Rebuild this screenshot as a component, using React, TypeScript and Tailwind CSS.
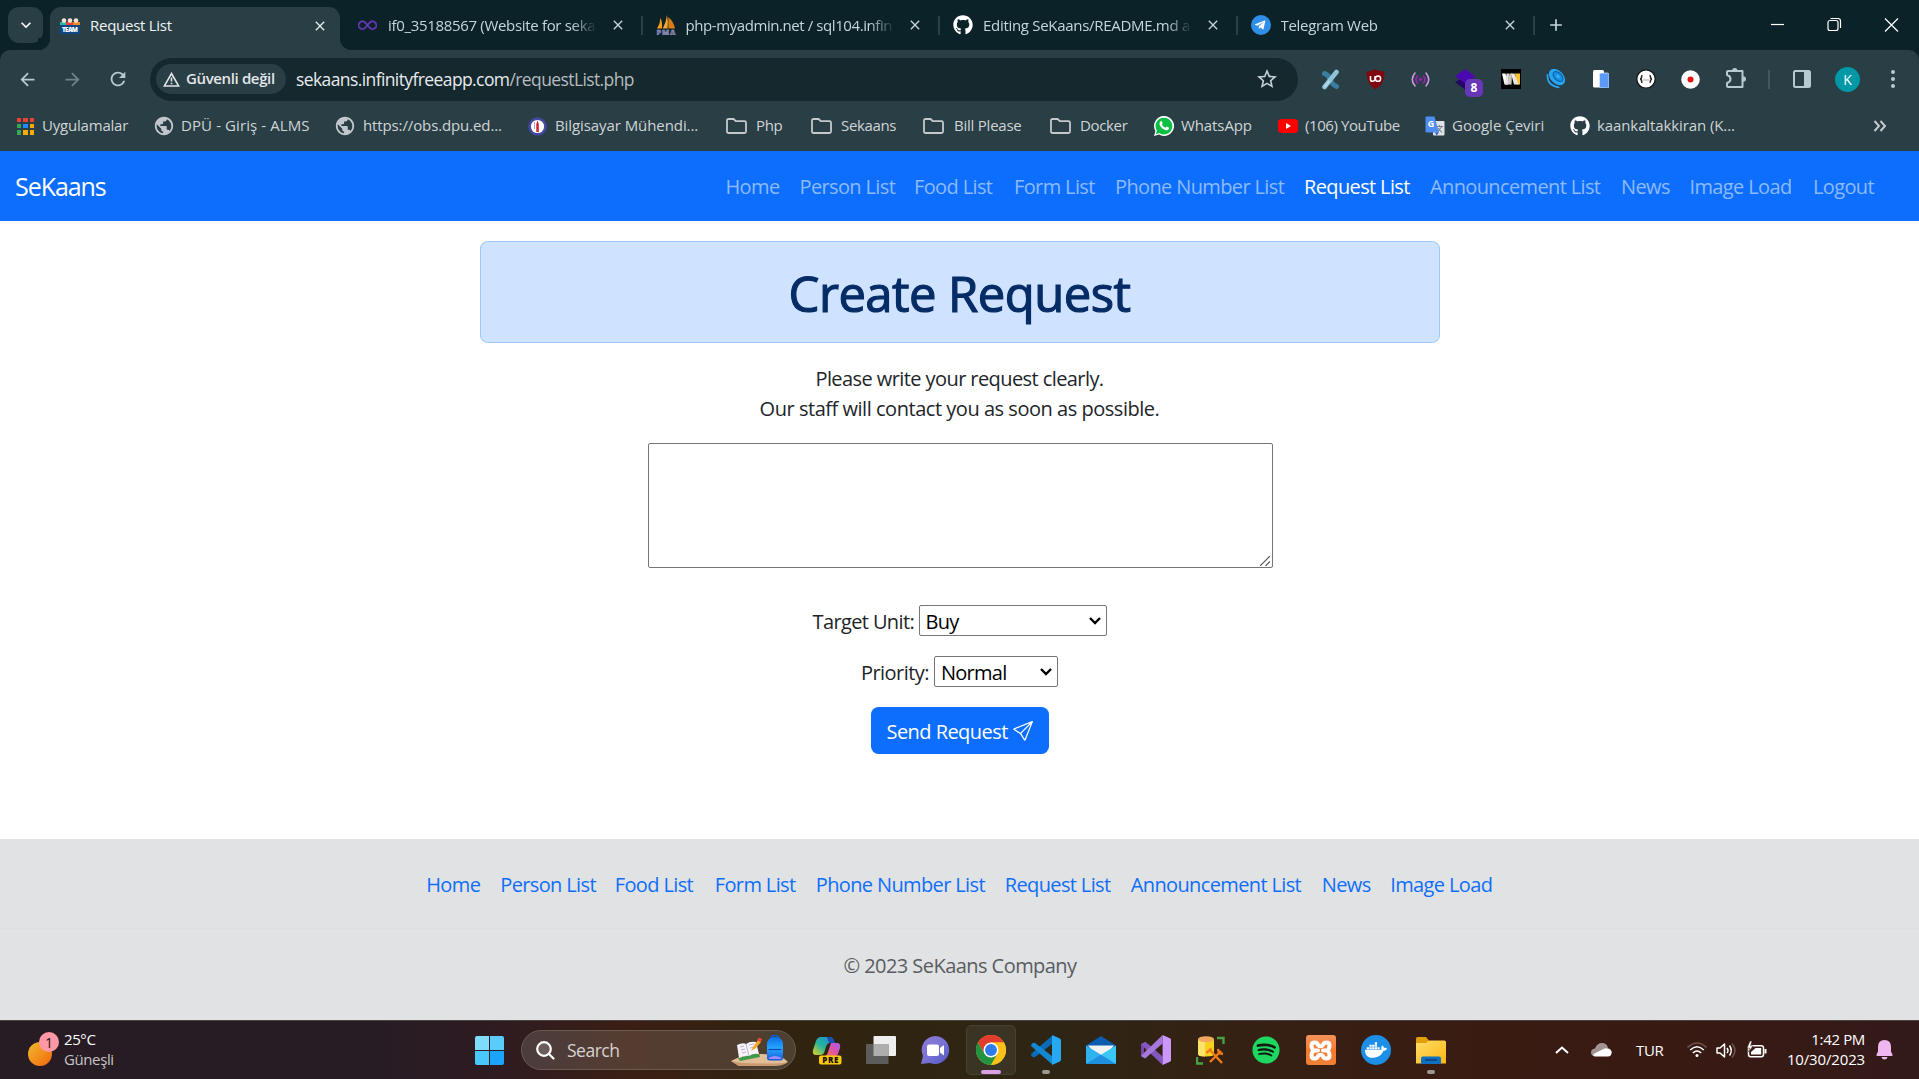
import React from "react";
import { BsInfinity, BsSend } from "react-icons/bs";
import { FaGithub, FaSpotify, FaDocker, FaTelegramPlane } from "react-icons/fa";
import { MdClose, MdPublic, MdStarBorder, MdArrowBack, MdArrowForward, MdRefresh, MdAdd, MdKeyboardArrowDown } from "react-icons/md";

/* ---------- small drawings ---------- */

const TeamIcon = () => (
  <svg width="20" height="16" viewBox="0 0 20 16" className="shrink-0">
    <rect x="0" y="4" width="7" height="4" fill="#2bb5b0" />
    <rect x="6" y="4" width="8" height="4" fill="#e5443a" />
    <rect x="13" y="4" width="7" height="4" fill="#f08a24" />
    <circle cx="4" cy="2.6" r="2.3" fill="#f3e3cf" />
    <circle cx="10" cy="2.6" r="2.3" fill="#f3e3cf" />
    <circle cx="16" cy="2.6" r="2.3" fill="#f3e3cf" />
    <rect x="0" y="7" width="20" height="9" fill="#0f4784" />
    <text x="10" y="14" textAnchor="middle" fontSize="6.4" fontWeight="800" fill="#fff" fontFamily="Open Sans, sans-serif" textLength="16">TEAM</text>
  </svg>
);

const PmaIcon = () => (
  <svg width="20" height="20" viewBox="0 0 20 20" className="shrink-0">
    <path d="M4.500 3 Q6.500 7 6 13.500 H1 Q4 9 4.500 3Z" fill="#f89c1c" />
    <path d="M11 0 Q12.500 7 11.500 13.500 H6.800 Q10 8 11 0Z" fill="#f6a636" />
    <path d="M12.300 2 Q18 7 19 13.500 H12.300Z" fill="#d97d12" />
    <text x="10" y="19.600" textAnchor="middle" fontSize="7.500" fontWeight="800" fill="#5d5f9c" stroke="#c9c9dd" strokeWidth=".3" fontFamily="Open Sans, sans-serif" textLength="19">PMA</text>
  </svg>
);

const AppsIcon = () => (
  <span className="grid size-[17px] shrink-0 grid-cols-3 gap-[2px]">
    <i className="bg-[#ea4335]" /><i className="bg-[#ea4335]" /><i className="bg-[#ea4335]" />
    <i className="bg-[#34a853]" /><i className="bg-[#1a8cff]" /><i className="bg-[#fbab04]" />
    <i className="bg-[#34a853]" /><i className="bg-[#fbab04]" /><i className="bg-[#fbab04]" />
  </span>
);

const GlobeIcon = () => <MdPublic className="size-[22px] shrink-0 -mx-[2px] text-[#c3c7cc]" />;

const UniIcon = () => (
  <svg width="19" height="19" viewBox="0 0 19 19" className="shrink-0">
    <circle cx="9.500" cy="9.500" r="9.300" fill="#4548a0" />
    <circle cx="9.500" cy="9.500" r="6.600" fill="#fff" />
    <path d="M9.500 3.500 L10.800 7 V15 H8.300 V7Z" fill="#d3202c" />
    <path d="M6.500 5 V12" stroke="#aab" strokeWidth="1" />
  </svg>
);

const FolderIcon = () => (
  <svg width="21" height="16" viewBox="0 0 21 16" className="shrink-0" fill="none" stroke="#c5c9cb" strokeWidth="1.800">
    <path d="M2.500 1 H7.600 L9.800 3.200 H18.500 Q20 3.200 20 4.700 V13.500 Q20 15 18.500 15 H2.500 Q1 15 1 13.500 V2.500 Q1 1 2.500 1Z" />
  </svg>
);

const WhatsIcon = () => (
  <svg width="20" height="20" viewBox="0 0 20 20" className="shrink-0">
    <path d="M0 20 L1.400 15 A10 10 0 1 1 5 18.600Z" fill="#fff" />
    <path d="M1.800 18.200 L2.900 14.700 A8.400 8.400 0 1 1 5.300 17.100Z" fill="#0bbf45" />
    <path d="M6.600 5.200 Q7.600 4.700 8 5.600 L8.700 7.200 Q8.800 7.700 8 8.500 Q9 10.700 11.500 11.700 L12.400 10.700 Q12.700 10.500 13.100 10.700 L14.800 11.600 Q15.200 11.900 14.800 12.900 Q13.800 14.700 11 13.900 Q7 12.500 5.600 9 Q5.100 6.500 6.600 5.200Z" fill="#fff" />
  </svg>
);

const YouTubeIcon = () => (
  <svg width="20" height="14" viewBox="0 0 20 14" className="shrink-0">
    <rect width="20" height="14" rx="3.500" fill="#f00" />
    <path d="M8 4 L13 7 L8 10Z" fill="#fff" />
  </svg>
);

const TranslateIcon = () => (
  <svg width="20" height="20" viewBox="0 0 20 20" className="shrink-0">
    <rect x="8" y="5" width="11.500" height="14.500" rx="1" fill="#dfe3e8" />
    <path d="M11 10.500 H18 M14.500 9 V10.500 M12 16.500 L16.500 11 M13 12 L17 16.500" stroke="#7a8288" strokeWidth="1.100" />
    <path d="M1.500 0.500 H9.500 L14 16.500 H1.500 Q.5 16.500 .5 15.500 V1.500 Q.5 .5 1.500 .5Z" fill="#4f8df0" />
    <path d="M10 16.500 H14 L11.500 19.500Z" fill="#3a55c8" />
    <text x="6" y="11" textAnchor="middle" fontSize="9" fontWeight="700" fill="#fff" fontFamily="Open Sans, sans-serif">G</text>
  </svg>
);

/* ---------- browser chrome ---------- */

const Tab = ({ icon, title, track }: { icon: React.ReactNode; title: string; track: string }) => (
  <div className="mr-[13px] flex h-[36px] w-[284.500px] shrink-0 items-center">
    <span className="flex w-[30px] shrink-0 items-center">{icon}</span>
    <span className={`w-[209px] overflow-hidden whitespace-nowrap text-[15px] font-medium text-[#c3d6dc] [mask-image:linear-gradient(to_right,black_88%,transparent)] ${track}`}>{title}</span>
    <MdClose className="ml-auto mr-[15px] size-[16px] shrink-0 text-[#c5d6db]" />
    <span className="h-[19px] w-[2px] shrink-0 bg-[#2b4148]" />
  </div>
);

const TabStrip = () => (
  <div className="flex h-[50px] items-start bg-[#0c2229]">
    <div className="ml-[8px] mt-[7px] flex h-[36px] w-[35px] items-center justify-center rounded-[11px] bg-[#293e45]">
      <MdKeyboardArrowDown className="size-[20px] text-white" />
    </div>
    <div className="relative ml-[7px] mt-[7px] flex h-[43px] w-[290px] items-center rounded-t-[11px] bg-[#293e45] pb-[5px] pl-[10px]">
      <span className="absolute -left-[12px] bottom-0 size-[12px] bg-[radial-gradient(circle_at_0_0,#0c2229_12px,#293e45_12.500px)]" />
      <span className="absolute -right-[12px] bottom-0 size-[12px] bg-[radial-gradient(circle_at_100%_0,#0c2229_12px,#293e45_12.500px)]" />
      <TeamIcon />
      <span className="-mt-px ml-[10px] whitespace-nowrap text-[15px] font-medium tracking-[-0.270px] text-[#eef3f4]">Request List</span>
      <MdClose className="ml-auto mr-[12px] size-[16px] text-[#e4ecee]" />
    </div>
    <div className="ml-[18px] mt-[7px] flex h-[36px] items-center">
      <Tab icon={<BsInfinity className="size-[19px] stroke-[#6a3ac0] stroke-[0.500px] text-[#6a3ac0]" />} title="if0_35188567 (Website for seka" track="tracking-[-0.320px]" />
      <Tab icon={<PmaIcon />} title="php-myadmin.net / sql104.infin" track="tracking-[-0.420px]" />
      <Tab icon={<FaGithub className="size-[20px] text-white" />} title="Editing SeKaans/README.md a" track="tracking-[-0.300px]" />
      <Tab
        icon={
          <span className="flex size-[20px] items-center justify-center rounded-full bg-[#2f8fe8]">
            <FaTelegramPlane className="-ml-px size-[12px] text-white" />
          </span>
        }
        title="Telegram Web"
        track="tracking-[-0.300px]"
      />
      <MdAdd className="-ml-[2px] size-[20px] text-[#c5d6db]" />
    </div>
    <svg className="ml-auto mr-[20px] mt-[17px]" width="128" height="16" viewBox="0 0 128 16" fill="none" stroke="#fff" strokeWidth="1.200">
      <path d="M0 7.500 H13" />
      <rect x="57" y="3.500" width="10" height="10" rx="2" />
      <path d="M59.500 1.500 H67 Q69.500 1.500 69.500 4 V11" />
      <path d="M114 1.500 L127 14.500 M127 1.500 L114 14.500" />
    </svg>
  </div>
);

const Slot = ({ children }: { children?: React.ReactNode }) => (
  <span className="relative flex h-[43px] w-[45px] shrink-0 items-center justify-center">{children}</span>
);

const Extensions = () => (
  <div className="ml-[10px] flex items-center">
    <Slot>
      <svg width="19" height="21" viewBox="0 0 19 21" fill="none" strokeLinecap="round">
        <path d="M3.500 4.500 Q7 5.500 9 10 Q11 15.500 15.500 17.500" stroke="#3a7d9d" strokeWidth="5" />
        <path d="M15.500 3 L3.500 18" stroke="#8fc3d8" strokeWidth="4.600" />
        <path d="M4 17.500 L8 12.500" stroke="#b5dbe8" strokeWidth="2" />
      </svg>
    </Slot>
    <Slot>
      <svg width="19" height="21" viewBox="0 0 19 21">
        <path d="M9.500 0 Q13 2.500 18.500 2.500 Q19 15 9.500 20.500 Q0 15 .5 2.500 Q6 2.500 9.500 0Z" fill="#800610" />
        <path d="M4.500 7 V10.500 Q4.500 12.300 6.500 12.300 Q8.500 12.300 9 10.500 V7" fill="none" stroke="#fff" strokeWidth="1.500" />
        <circle cx="12" cy="9.700" r="2.600" fill="none" stroke="#fff" strokeWidth="1.500" />
      </svg>
    </Slot>
    <Slot>
      <svg width="19" height="15" viewBox="0 0 19 15" fill="none" strokeWidth="1.600" strokeLinecap="round">
        <path d="M4 1 Q-1.500 7.500 4 14 M15 1 Q20.500 7.500 15 14" stroke="#c79ad8" />
        <path d="M6.500 4 Q3.500 7.500 6.500 11 M12.500 4 Q15.500 7.500 12.500 11" stroke="#9d23b4" />
        <circle cx="9.500" cy="7.500" r="1.300" fill="#9d23b4" stroke="#9d23b4" strokeWidth="1" />
      </svg>
    </Slot>
    <Slot>
      <svg width="21" height="21" viewBox="0 0 21 21">
        <path d="M0 13 L10 20.500 L20 13 L12 7Z" fill="#220566" />
        <path d="M10 0 L20.500 7.500 L10.500 14.500 L0 7.500Z" fill="#4a08b0" />
      </svg>
      <span className="absolute left-[22px] top-[21px] flex h-[18px] w-[18px] items-center justify-center rounded-[5px] bg-[#6737b8] text-[12px] font-bold text-white">8</span>
    </Slot>
    <Slot>
      <svg width="20" height="20" viewBox="0 0 20 20">
        <rect width="20" height="20" fill="#000" />
        <path d="M14 4.500 H19 V15.500 H16Z" fill="#f7c32e" />
        <path d="M4.500 4.500 H1 L3.500 15.500 H7Z" fill="#fff" />
        <path d="M8 4.500 H5.500 L4 15.500 H7.500Z M10 4.500 H13.500 L17.500 15.500 H13Z" fill="#e9e6df" />
        <path d="M11 4.500 H8.500 L6.500 15.500 H10.500Z" fill="#cfcbc2" />
      </svg>
    </Slot>
    <Slot>
      <svg width="20" height="20" viewBox="0 0 20 20" fill="none">
        <ellipse cx="11" cy="8" rx="9.500" ry="6.500" transform="rotate(45 11 8)" fill="#25a5f5" />
        <ellipse cx="12" cy="7.500" rx="6" ry="3.600" transform="rotate(45 12 7.500)" fill="#1590e4" stroke="#0d5d9c" strokeWidth="1" />
        <ellipse cx="12" cy="7.500" rx="2" ry="1.200" transform="rotate(45 12 7.500)" fill="#37b6fb" />
        <path d="M1.500 5 Q.5 17 13.500 18.500" stroke="#25a5f5" strokeWidth="1.600" />
      </svg>
    </Slot>
    <Slot>
      <svg width="16" height="18" viewBox="0 0 16 18">
        <rect width="11" height="17.500" rx="1.500" fill="#fff" />
        <rect x="6.500" y="3" width="9.500" height="15" rx="1.500" fill="#5c9bf5" stroke="#dce9ff" strokeWidth=".7" />
      </svg>
    </Slot>
    <Slot>
      <svg width="20" height="20" viewBox="0 0 20 20">
        <circle cx="10" cy="10" r="9.200" fill="#fff" stroke="#111" strokeWidth="1.200" />
        <path d="M6.500 6.500 Q5.500 6.500 5.500 8 Q5.500 10 4 10 Q5.500 10 5.500 12 Q5.500 13.500 6.500 13.500 M13.500 6.500 Q14.500 6.500 14.500 8 Q14.500 10 16 10 Q14.500 10 14.500 12 Q14.500 13.500 13.500 13.500" stroke="#222" fill="none" strokeWidth="1.500" />
        <path d="M7.500 11 H12.500" stroke="#555" strokeWidth="1.200" strokeDasharray="1 1" />
      </svg>
    </Slot>
    <Slot>
      <svg width="19" height="19" viewBox="0 0 19 19">
        <circle cx="9.500" cy="9.500" r="9.300" fill="#fff" />
        <circle cx="9.500" cy="9.500" r="3" fill="#e81212" />
      </svg>
    </Slot>
    <Slot>
      <svg width="22" height="22" viewBox="0 0 22 22" fill="none" stroke="#b5cbd1" strokeWidth="2" className="-translate-y-px">
        <path d="M3 4 H17.500 V20 H3 Q2 20 2 19 V16 Q5.500 15 5.500 12 Q5.500 9 2 8 V5 Q2 4 3 4Z" strokeLinejoin="round" />
        <path d="M7 4 Q7 1 9.800 1 Q12.500 1 12.500 4Z M18 9.200 Q21 9.200 21 12 Q21 14.800 18 14.800Z" fill="#b5cbd1" stroke="none" />
      </svg>
    </Slot>
  </div>
);

const Toolbar = () => (
  <div className="flex h-[58px] items-center rounded-t-[10px] bg-[#293e45]">
    <div className="flex w-[150px] items-center pl-[17px]">
      <MdArrowBack className="size-[21px] text-[#b5cbd1]" />
      <MdArrowForward className="ml-[24px] size-[21px] text-[#6f8388]" />
      <MdRefresh className="ml-[24px] size-[22px] text-[#b5cbd1]" />
    </div>
    <div className="flex h-[43px] w-[1148px] items-center rounded-full bg-[#14282e]">
      <div className="ml-[6px] flex h-[30px] w-[130px] items-center rounded-full bg-[#293e45] pl-[7px]">
        <svg width="17" height="15" viewBox="0 0 17 15" fill="none" stroke="#e0e4e6" strokeWidth="1.600">
          <path d="M8.500 1.500 L15.700 14 H1.300Z" /><path d="M8.500 5.500 V9.500 M8.500 10.700 V12.200" />
        </svg>
        <span className="-mt-px ml-[6px] whitespace-nowrap text-[15px] font-semibold tracking-[-0.370px] text-[#e3e7e9]">Güvenli değil</span>
      </div>
      <span className="ml-[10px] whitespace-nowrap text-[17.500px] tracking-[-0.600px] text-[#e8eaed]">sekaans.infinityfreeapp.com<span className="text-[#b5bbbe]">/requestList.php</span></span>
      <MdStarBorder className="ml-auto mr-[19px] size-[24px] text-[#c5d0d4]" />
    </div>
    <Extensions />
    <span className="ml-[10px] h-[19px] w-[2px] bg-[#43585f]" />
    <svg width="18" height="18" viewBox="0 0 18 18" className="ml-[23px]">
      <rect x="1" y="1" width="16" height="16" rx="1.500" fill="none" stroke="#b5cbd1" strokeWidth="2" />
      <path d="M11 1 H17 V17 H11Z" fill="#b5cbd1" />
    </svg>
    <span className="ml-[24px] flex size-[25px] items-center justify-center rounded-full bg-[#0097a7] text-[14px] text-white">K</span>
    <span className="ml-[31px] flex flex-col gap-[3px]">
      <i className="size-[4px] rounded-full bg-[#b5cbd1]" /><i className="size-[4px] rounded-full bg-[#b5cbd1]" /><i className="size-[4px] rounded-full bg-[#b5cbd1]" />
    </span>
  </div>
);

const bookmarks: { icon: React.ReactNode; label: string; w: string; g: string; t: string }[] = [
  { icon: <AppsIcon />, label: "Uygulamalar", w: "w-[138px]", g: "w-[25px]", t: "tracking-[-0.200px]" },
  { icon: <GlobeIcon />, label: "DPÜ - Giriş - ALMS", w: "w-[181px]", g: "w-[26px]", t: "tracking-[0.100px]" },
  { icon: <GlobeIcon />, label: "https://obs.dpu.ed...", w: "w-[192px]", g: "w-[27px]", t: "tracking-[-0.120px]" },
  { icon: <UniIcon />, label: "Bilgisayar Mühendi...", w: "w-[198px]", g: "w-[27px]", t: "tracking-[-0.080px]" },
  { icon: <FolderIcon />, label: "Php", w: "w-[85px]", g: "w-[30px]", t: "tracking-[-0.300px]" },
  { icon: <FolderIcon />, label: "Sekaans", w: "w-[112px]", g: "w-[30px]", t: "tracking-[-0.350px]" },
  { icon: <FolderIcon />, label: "Bill Please", w: "w-[127px]", g: "w-[31px]", t: "tracking-[-0.230px]" },
  { icon: <FolderIcon />, label: "Docker", w: "w-[104px]", g: "w-[30px]", t: "tracking-[-0.350px]" },
  { icon: <WhatsIcon />, label: "WhatsApp", w: "w-[124px]", g: "w-[27px]", t: "tracking-[-0.100px]" },
  { icon: <YouTubeIcon />, label: "(106) YouTube", w: "w-[147px]", g: "w-[27px]", t: "tracking-[-0.410px]" },
  { icon: <TranslateIcon />, label: "Google Çeviri", w: "w-[145px]", g: "w-[27px]", t: "tracking-[0px]" },
  { icon: <FaGithub className="size-[20px] text-white" />, label: "kaankaltakkiran (K...", w: "w-[180px]", g: "w-[27px]", t: "tracking-[-0.100px]" },
];

const BookmarkBar = () => (
  <div className="flex h-[43px] items-start bg-[#293e45] pl-[17px]">
    {bookmarks.map((b) => (
      <div key={b.label} className={`flex h-[36px] shrink-0 items-center ${b.w}`}>
        <span className={`flex shrink-0 items-center ${b.g}`}>{b.icon}</span>
        <span className={`-mt-[2px] whitespace-nowrap text-[15px] font-medium text-[#d0d4d6] ${b.t}`}>{b.label}</span>
      </div>
    ))}
    <svg width="14" height="12" viewBox="0 0 14 12" fill="none" stroke="#c5c9cb" strokeWidth="2" className="ml-auto mr-[32px] mt-[12px]">
      <path d="M1.500 1 L6 6 L1.500 11 M7.500 1 L12 6 L7.500 11" />
    </svg>
  </div>
);

/* ---------- page ---------- */

const links: [string, string][] = [
  ["Home", "w-[54px]"],
  ["Person List", "w-[94.500px]"],
  ["Food List", "w-[80px]"],
  ["Form List", "w-[81px]"],
  ["Phone Number List", "w-[169px]"],
  ["Request List", "w-[106px]"],
  ["Announcement List", "w-[171px]"],
  ["News", "w-[48.500px]"],
  ["Image Load", "w-[103.500px]"],
  ["Logout", "w-[63px]"],
];

const NavLink = ({ label, w, color }: { label: string; w: string; color: string }) => (
  <a className={`shrink-0 whitespace-nowrap text-[20px] tracking-[-0.630px] ${w} ${color}`}>{label}</a>
);

const Select = ({ value, w }: { value: string; w: string }) => (
  <span className={`relative inline-flex h-[31px] ${w}`}>
    <select className="h-full w-full appearance-none rounded-[2px] border border-[#767676] bg-white pl-[6px] pt-[2px] text-[20px] leading-[27px] tracking-[-0.750px] text-black">
      <option>{value}</option>
    </select>
    <svg width="12" height="8" viewBox="0 0 12 8" fill="none" stroke="#000" strokeWidth="2.400" className="pointer-events-none absolute right-[6px] top-[12px]">
      <path d="M1 1 L6 6 L11 1" />
    </svg>
  </span>
);

const Page = () => (
  <div className="flex h-[869px] flex-col bg-white text-[20px] leading-[30px] tracking-[-0.550px] text-[#212529]">
    <nav className="flex h-[70px] items-center bg-[#0d6efd] pl-[15px] pr-[43px]">
      <span className="text-[25px] tracking-[-1.050px] text-white">SeKaans</span>
      <div className="ml-auto flex gap-[20px] pt-[2px]">
        {links.map(([l, w]) => (
          <NavLink key={l} label={l} w={w} color={l === "Request List" ? "text-white" : "text-[#8bbafe]"} />
        ))}
      </div>
    </nav>
    <main className="flex flex-1 flex-col items-center pt-[20px]">
      <div className="flex h-[102px] w-[960px] items-center justify-center rounded-[7.500px] border border-[#9ec5fe] bg-[#cfe2ff] pt-px">
        <h1 className="text-[49px] tracking-[-0.550px] text-[#052c65] [-webkit-text-stroke:1.200px]">Create Request</h1>
      </div>
      <p className="mt-[21px] text-center">
        <span className="tracking-[-0.580px]">Please write your request clearly.</span><br />
        <span className="tracking-[-0.470px]">Our staff will contact you as soon as possible.</span>
      </p>
      <div className="relative ml-px mt-[19px] h-[125px] w-[625px]">
        <textarea className="block h-full w-full resize-none rounded-[2px] border border-[#767676]" />
        <svg width="10" height="10" viewBox="0 0 10 10" stroke="#555" strokeWidth="1.200" className="absolute bottom-[2px] right-[3px]">
          <path d="M0 10 L10 0 M5.500 10 L10 5.500" />
        </svg>
      </div>
      <div className="mt-[37px] flex h-[31px] items-center justify-center">
        <label className="mr-[1px] w-[105px] pt-[3px] tracking-[-0.620px]">Target Unit:</label>
        <Select value="Buy" w="w-[188px]" />
      </div>
      <div className="mt-[20px] flex h-[31px] items-center justify-center">
        <label className="mr-[1px] w-[72px] pt-[3px]">Priority:</label>
        <Select value="Normal" w="w-[124px]" />
      </div>
      <button className="mt-[20px] flex h-[47px] w-[178px] items-center rounded-[7.500px] bg-[#0d6efd] pl-[16px] pt-[2px] text-white">
        <span className="w-[126px] whitespace-nowrap text-left">Send Request</span>
        <BsSend className="size-[20px] -translate-y-px" />
      </button>
    </main>
    <footer className="h-[181px] bg-[#e1e2e4] text-center">
      <div className="flex h-[90px] justify-center gap-[20px] border-b border-[#dddee1] pt-[31px] pl-px text-left">
        {links.slice(0, 9).map(([l, w]) => (
          <NavLink key={l} label={l} w={w} color="text-[#0d6efd]" />
        ))}
      </div>
      <p className="pl-px pt-[22px] text-[#595c60]">© 2023 SeKaans Company</p>
    </footer>
  </div>
);

/* ---------- taskbar ---------- */

const App55 = ({ children, dot, active }: { children?: React.ReactNode; dot?: boolean; active?: boolean }) => (
  <span className="flex h-full w-[55px] shrink-0 items-center justify-center">
    <span className={`relative flex size-[50px] items-center justify-center rounded-[5px] ${active ? "border border-[#464131] bg-[#3a3425]" : ""}`}>
      {children}
      {dot && <i className="absolute bottom-[1px] h-[4px] w-[8px] rounded-full bg-[#9d9792]" />}
      {active && <i className="absolute bottom-0 h-[4px] w-[20px] rounded-full bg-[#d9a0e6]" />}
    </span>
  </span>
);

const SearchArt = () => (
  <svg width="58" height="34" viewBox="0 0 58 34" className="translate-y-[2px]">
    <defs>
      <linearGradient id="pack" x1="0" y1="0" x2="0" y2="1"><stop offset="0" stopColor="#0a6fe8" /><stop offset=".5" stopColor="#28a7ff" /><stop offset="1" stopColor="#1457d8" /></linearGradient>
    </defs>
    <path d="M0 26 Q12 19 30 19 Q50 19 57 27 Q50 31 30 31 H8Z" fill="#e2bd96" />
    <path d="M0 26 L8 31 H44 Q52 31 57 27 Q50 29 30 28.500 Q8 28.500 0 26Z" fill="#c79a70" />
    <path d="M7 23 L28 18 L29 22 L9 26Z" fill="#3f9a4c" />
    <path d="M6 10 Q12 7 15 9 Q19 6 25 7 L28 19 Q22 18 18 21 Q14 20 8 23Z" fill="#f6f3fb" />
    <path d="M15 9 L18 21 M9 12 L13 11 M10 15 L14 14 M11 18 L15 17 M18 10 L23 9 M19 13 L24 12" stroke="#b9b2cc" strokeWidth="1" />
    <path d="M20 16 L22 12 L27 5 L30 7 L25 13Z" fill="#f5a623" />
    <path d="M26 5 L28 2.500 L31 4 L30 7Z" fill="#e8483a" />
    <path d="M40 4 Q40 .5 44 .5 Q48 .5 48 4" stroke="#0a5fd0" strokeWidth="1.600" fill="none" />
    <path d="M36 10 Q36 2 44 2 Q52 2 52 10 V23 Q52 25.500 49 25.500 H39 Q36 25.500 36 23Z" fill="url(#pack)" />
    <path d="M37.500 14.500 H50.500" stroke="#0a48b8" strokeWidth="1.200" />
    <path d="M38 22.500 Q44 19.500 50 22.500 V24 H38Z" fill="#9d8bff" />
  </svg>
);

const Copilot = () => (
  <svg width="30" height="30" viewBox="0 0 30 30" className="translate-x-px">
    <defs>
      <linearGradient id="ca" x1="0" y1="1" x2="1" y2="0"><stop offset="0" stopColor="#e8d21e" /><stop offset=".45" stopColor="#27b49c" /><stop offset="1" stopColor="#1a86e0" /></linearGradient>
      <linearGradient id="cb" x1="0" y1="1" x2="1" y2="0"><stop offset="0" stopColor="#f5803a" /><stop offset=".5" stopColor="#e052a8" /><stop offset="1" stopColor="#a45bf0" /></linearGradient>
    </defs>
    <path d="M9 2 H18 Q21 2 22 6 L23 8 H18 Q15 8 14 12 L12 18 Q11 20 8 20 H4 Q0 20 1 15 L4 6 Q5.500 2 9 2Z" fill="url(#ca)" />
    <path d="M15 2 H18 Q21 2 22 6 L23 8 H17Z" fill="#1c4fb4" />
    <path d="M19 8 H25 Q29 8 28 13 L26 19 Q25 22 21 22 H13 Q16 19 17 14Z" fill="url(#cb)" />
    <rect x="7" y="20.500" width="22.500" height="9" rx="2" fill="#fec90c" />
    <text x="18.300" y="28" textAnchor="middle" fontSize="8" fontWeight="800" fill="#111" fontFamily="Open Sans, sans-serif" textLength="16">PRE</text>
  </svg>
);

const Chrome = () => (
  <svg width="30" height="30" viewBox="0 0 48 48">
    <circle cx="24" cy="24" r="24" fill="#fbc116" />
    <path d="M24 12 H44.800 A24 24 0 0 0 3.200 12 L13.600 30Z" fill="#e33b2e" />
    <path d="M3.200 12 A24 24 0 0 0 24 48 L34.400 30 L24 36 L13.600 30Z" fill="#229342" />
    <path d="M44.800 12 A24 24 0 0 1 24 48 L34.400 30 L34.400 18 L24 12Z" fill="#fbc116" />
    <circle cx="24" cy="24" r="12" fill="#fff" />
    <circle cx="24" cy="24" r="9.500" fill="#2f7bee" />
  </svg>
);

const VsCode = () => (
  <svg width="30" height="30" viewBox="0 0 100 100">
    <path d="M72 1 L72 28 L14 73 Q10 76 6 73 L1 68 Q-1 65 2 62Z" fill="#0a6cb8" />
    <path d="M72 99 L72 72 L14 27 Q10 24 6 27 L1 32 Q-1 35 2 38Z" fill="#1287d2" />
    <path d="M72 1 L96 12 Q100 14 100 18 V82 Q100 86 96 88 L72 99 Q70 99 70 95 V5 Q70 1 72 1Z" fill="#27a8f2" />
  </svg>
);

const VisualStudio = () => (
  <svg width="30" height="30" viewBox="0 0 100 100">
    <path fillRule="evenodd" d="M0 30 L14 23 L28 36 V64 L14 78 L0 70Z M10 40 V60 L19 50Z" fill="#7449a8" />
    <path d="M14 23 L26 32 L72 72 V100 L0 31Z" fill="#8457c0" />
    <path d="M72 0 V28 L28 66 L14 78 L0 70 L10 60Z" fill="#a678dc" />
    <path d="M72 0 L98 12 Q100 14 100 16 V84 Q100 86 98 88 L72 100Z" fill="#cc97fa" />
  </svg>
);

const Taskbar = () => (
  <div className="flex h-[59px] items-center border-t border-[#4a4440] bg-[linear-gradient(90deg,#281c24_0%,#281c24_20%,#2f1b21_26%,#3a1f14_33%,#30240f_42%,#2e2515_55%,#352113_65%,#3a1b12_78%,#381a14_90%,#321a1a_100%)] text-white">
    <div className="flex w-[462px] items-center pb-[2px] pl-[28px]">
      <span className="relative h-[34px] w-[31px]">
        <i className="absolute bottom-0 left-0 size-[24px] rounded-full bg-gradient-to-br from-[#eebb2c] to-[#f0620c]" />
        <span className="absolute right-0 top-0 flex size-[20px] items-center justify-center rounded-full bg-[#ff98a4] text-[14px] text-[#201418]">1</span>
      </span>
      <div className="ml-[5px] text-[15px] leading-[20px] tracking-[-0.400px]">
        <div>25°C</div>
        <div className="text-[#c9c4c6]">Güneşli</div>
      </div>
    </div>
    <App55>
      <span className="grid size-[29px] grid-cols-2 gap-px">
        <i className="rounded-tl-[2px] bg-[#7fdcfc]" /><i className="rounded-tr-[2px] bg-[#5accfb]" />
        <i className="rounded-bl-[2px] bg-[#49c8fb]" /><i className="rounded-br-[2px] bg-[#1aa5fa]" />
      </span>
    </App55>
    <div className="ml-[4px] flex h-[40px] w-[275px] items-center rounded-full border border-[#6b5a50] bg-[linear-gradient(90deg,#4b3c3d,#553c30_40%,#4c4030)] pl-[14px] pr-[6px]">
      <svg width="19" height="19" viewBox="0 0 19 19" fill="none" stroke="#fff" strokeWidth="2.200" strokeLinecap="round">
        <circle cx="8" cy="8" r="6.800" fill="#6a5d5a" /><path d="M13 13 L17.500 17.500" />
      </svg>
      <span className="ml-[12px] text-[17.500px] tracking-[-0.500px] text-[#d8d2cf]">Search</span>
      <span className="ml-auto"><SearchArt /></span>
    </div>
    <div className="ml-[2px] flex h-full">
      <App55><Copilot /></App55>
      <App55>
        <svg width="30" height="28" viewBox="0 0 30 28">
          <rect x="7.500" y="0" width="22.500" height="20" rx="1" fill="#eee" />
          <rect x="0" y="8" width="22.500" height="20" rx="1" fill="#5c5c5b" />
          <rect x="7.500" y="8" width="15" height="12" fill="#aeaeac" />
        </svg>
      </App55>
      <App55>
        <svg width="29" height="28" viewBox="0 0 29 28">
          <defs><linearGradient id="cc" x1="0" y1="0" x2="1" y2="1"><stop offset="0" stopColor="#8f7ad4" /><stop offset=".5" stopColor="#7a72d6" /><stop offset="1" stopColor="#4f55c4" /></linearGradient></defs>
          <path d="M14.500 0 A14 14 0 1 1 9 27 L0 28 L2 20 A14 14 0 0 1 14.500 0Z" fill="url(#cc)" />
          <rect x="6" y="8.500" width="12" height="11.500" rx="2" fill="#fff" /><path d="M19 12 L23 9 V19.500 L19 16.500Z" fill="#fff" />
        </svg>
      </App55>
      <App55 active><Chrome /></App55>
      <App55 dot><VsCode /></App55>
      <App55>
        <svg width="30" height="28" viewBox="0 0 30 28">
          <path d="M0 9.500 L15 0 L30 9.500 V14 H0Z" fill="#0b5cb0" />
          <path d="M2 9.500 H28 L18 22 H12Z" fill="#f2f2f2" />
          <path d="M0 9.500 L30 28 H1.500 Q0 28 0 26.500Z" fill="#2fb3ee" />
          <path d="M30 9.500 V26.500 Q30 28 28.500 28 L15 18.800Z" fill="#38c8f5" />
          <path d="M0 28 L15 18.800 L30 28Z" fill="#1f8fe0" />
        </svg>
      </App55>
      <App55><VisualStudio /></App55>
      <App55>
        <svg width="29" height="29" viewBox="0 0 29 29">
          <path d="M2 3 V18 Q2 20.500 10 20.500 Q18 20.500 18 18 V3Z" fill="#f7cf1c" />
          <path d="M2 3 V18 Q2 20.500 9 20.500 V3Z" fill="#fbe36a" />
          <ellipse cx="10" cy="3.200" rx="8" ry="3" fill="#efa95c" />
          <path d="M21 2 H27.500 V8 M1 21 V27.500 H7" fill="none" stroke="#4aa045" strokeWidth="2.400" />
          <path d="M14 14 L26 27 M25 15 L14 26 M10.500 17 L15.500 12.500 M22 13 L23 17 L27 18" stroke="#f07a1a" strokeWidth="2.400" fill="none" />
        </svg>
      </App55>
      <App55>
        <span className="flex size-[26px] items-center justify-center rounded-full bg-[#14180f]">
          <FaSpotify className="size-[28px] shrink-0 text-[#1ed760]" />
        </span>
      </App55>
      <App55>
        <span className="flex size-[30px] items-center justify-center rounded-[3px] bg-gradient-to-b from-[#f3935a] via-[#f47a2c] to-[#f08038]">
          <svg width="23" height="21" viewBox="0 0 23 21" fill="none" stroke="#fff" strokeLinejoin="round" strokeLinecap="round">
            <path d="M9 10.500 H5 Q2.500 9 2.500 5.500 Q2.500 2.500 5.500 2.500 Q8.500 2.500 9 5 Q11.500 7.500 14 5 Q14.500 2.500 17.500 2.500 Q20.500 2.500 20.500 5.500 Q20.500 9 18 10.500 Q20.500 12 20.500 15.500 Q20.500 18.500 17.500 18.500 Q14.500 18.500 14 16 Q11.500 13.500 9 16 Q8.500 18.500 5.500 18.500 Q2.500 18.500 2.500 15.500 Q2.500 12 5 10.500 M14 10.500 H17" strokeWidth="4" />
          </svg>
        </span>
      </App55>
      <App55><span className="flex size-[30px] items-center justify-center rounded-full bg-[#1d8fe8]"><FaDocker className="size-[22px] text-white" /></span></App55>
      <App55 dot>
        <svg width="30" height="27" viewBox="0 0 30 27">
          <defs><linearGradient id="fx" x1="0" y1="0" x2="1" y2="1"><stop offset="0" stopColor="#ffdc68" /><stop offset="1" stopColor="#fcb714" /></linearGradient></defs>
          <path d="M0 1.500 Q0 0 1.500 0 H10 L13 3.500 V8 H0Z" fill="#dfa009" />
          <path d="M0 6 H10 L13 3.500 H28.500 Q30 3.500 30 5 V26.500 H0Z" fill="url(#fx)" />
          <path d="M5 27 V21.500 Q5 19.500 7 19.500 H23 Q25 19.500 25 21.500 V27Z" fill="#0f6fc0" />
          <path d="M9 23 H21" stroke="#0a3f78" strokeWidth="1.500" />
        </svg>
      </App55>
    </div>
    <div className="ml-auto flex items-center text-[15px]">
      <svg width="14" height="8" viewBox="0 0 14 8" fill="none" stroke="#fff" strokeWidth="2"><path d="M1 7 L7 1.500 L13 7" /></svg>
      <svg width="21" height="14" viewBox="0 0 21 14" className="ml-[22px]">
        <path d="M4 13 Q0 13 0 9.500 Q0 6 4 5.500 Q6 0 11 0 Q16 0 17 5 Q21 6 20.500 10 Q20 13 17 13Z" fill="#a09391" />
        <path d="M3 13.200 Q1 12 3.500 10.500 L13 5.800 Q15 4.800 17 5.800 Q21 7 20.500 10 Q20 13.500 17 13.500 H4Z" fill="#fff" />
      </svg>
      <span className="ml-[24px] w-[28px] tracking-[-0.300px]">TUR</span>
      <svg width="20" height="16" viewBox="0 0 20 16" fill="none" stroke="#fff" strokeWidth="1.600" className="ml-[23px]">
        <path d="M.5 5.500 Q10 -3.500 19.500 5.500" stroke="#6d544c" /><path d="M3.200 8 Q10 1.500 16.800 8 M5.800 11 Q10 7 14.200 11" /><circle cx="10" cy="13.500" r="1.500" fill="#fff" stroke="none" />
      </svg>
      <svg width="21" height="17" viewBox="0 0 21 17" fill="none" stroke="#fff" strokeWidth="1.500" className="ml-[9px]">
        <path d="M1 6 H4 L8.500 2 V15 L4 11 H1Z" strokeLinejoin="round" /><path d="M11 6 Q13 8.500 11 11 M13.500 3.500 Q17 8.500 13.500 13.500" /><path d="M16 1.500 Q22 8.500 16 15.500" stroke="#6d544c" />
      </svg>
      <svg width="21" height="17" viewBox="0 0 21 17" className="-mt-[2px] ml-[9px]">
        <rect x="2.500" y="4.700" width="15" height="11" rx="2.200" fill="none" stroke="#fff" strokeWidth="1.500" />
        <path d="M5 13.500 V11 L9.500 7 H15.200 V13.500Z" fill="#fff" /><path d="M18.500 8 H20.500 V12.500 H18.500Z" fill="#fff" />
        <path d="M4 0 L1 7 H3.500 L2.500 11 L7 5 H4.500 L6 0Z" fill="#fff" stroke="#381a14" strokeWidth=".5" />
      </svg>
      <div className="-mt-[2px] ml-[10px] w-[88px] whitespace-nowrap text-right leading-[20px]">
        <div className="tracking-[-0.350px]">1:42 PM</div>
        <div className="tracking-[-0.150px]">10/30/2023</div>
      </div>
      <svg width="17" height="20" viewBox="0 0 17 20" className="ml-[11px] mr-[26px]">
        <path d="M8.500 0 Q15 0 15 7 V11.500 L16.500 14.500 Q17 16 15.500 16 H1.500 Q0 16 .5 14.500 L2 11.500 V7 Q2 0 8.500 0Z" fill="#efb6f0" />
        <path d="M5.500 17 H11.500 Q11 19.500 8.500 19.500 Q6 19.500 5.500 17Z" fill="#efb6f0" />
      </svg>
    </div>
  </div>
);

export default function App() {
  return (
    <div className="flex h-[1079px] w-[1919px] flex-col overflow-hidden bg-[#0c2229] font-['Open_Sans','Noto_Sans',sans-serif]">
      <TabStrip />
      <Toolbar />
      <BookmarkBar />
      <Page />
      <Taskbar />
    </div>
  );
}
